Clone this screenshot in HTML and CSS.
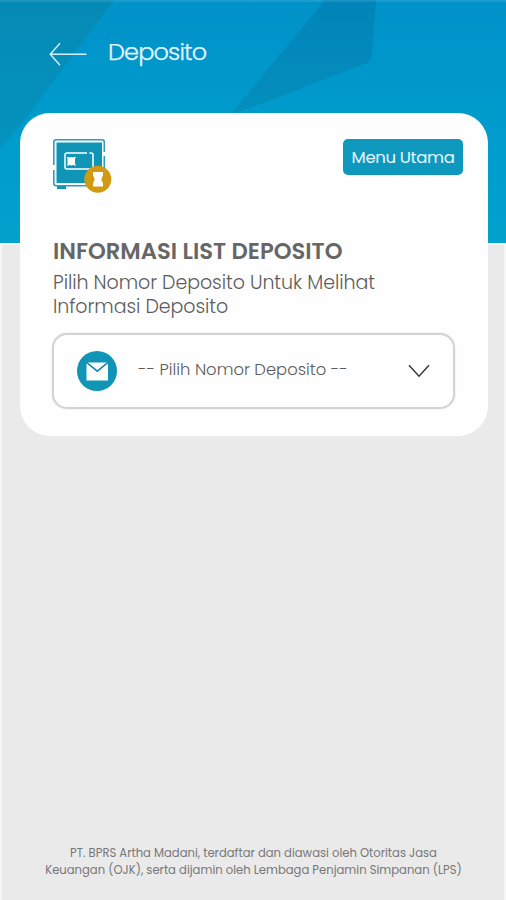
FILE: index.html
```html
<!DOCTYPE html>
<html lang="id">
<head>
<meta charset="utf-8">
<title>Deposito</title>
<link rel="stylesheet" href="styles.css">
</head>
<body>
<div class="screen">
  <svg class="backdrop" viewBox="0 0 506 245" aria-hidden="true">
    <defs>
      <linearGradient id="sky" x1="0" y1="0" x2="0" y2="1">
        <stop offset="0" stop-color="#0092c9"/><stop offset=".5" stop-color="#009bcc"/><stop offset="1" stop-color="#02a2cc"/>
      </linearGradient>
      <linearGradient id="shade" x1="0" y1="0" x2="0" y2="1">
        <stop offset="0" stop-color="#0589b5"/><stop offset="1" stop-color="#0494bf"/>
      </linearGradient>
      <linearGradient id="facet" x1="0" y1="0" x2="0" y2="1">
        <stop offset="0" stop-color="#0084b9"/><stop offset="1" stop-color="#048fbc"/>
      </linearGradient>
    </defs>
    <rect width="506" height="243" fill="url(#sky)"/>
    <path d="M0 243H506V245H0Z" fill="#f5f5f5"/>
    <path d="M0 0H114L24 121L0 149Z" fill="url(#shade)"/>
    <path d="M325 0H376L372 54Q371 61 367 63L253 107L231 114Z" fill="url(#facet)"/>
    <path d="M0 0H506V2H0Z" fill="#fff" opacity=".1"/>
  </svg>
  <header class="topbar">
    <svg class="back" width="38" height="24" viewBox="0 0 38 24"><path d="M37.5 12.3H1.2M11 1.3L1.2 12.3L11 23.3"/></svg>
    <h1>Deposito</h1>
  </header>
  <main class="card">
    <div class="card-top">
      <svg class="safe" width="60" height="56" viewBox="0 0 60 56">
        <path d="M4 47.5h9v3.5H4z" fill="#1095b7"/>
        <rect x=".8" y="1.8" width="50.5" height="46" rx="2.5" fill="none" stroke="#2f9cbe" stroke-width="1.6"/>
        <path d="M3.5 4.5h45.5v40.5h-45.5z" fill="#1095b7"/>
        <path d="M0 27h2.5v5H0zM50 14h3v4h-3z" fill="#fefefe"/>
        <path d="M34 15H14Q12 15 12 17V29Q12 31 14 31H38Q40 31 40 29V17Q40 15 38 15H36.5" fill="none" stroke="#fff" stroke-width="1.5"/>
        <path d="M14.5 19.5h7.5v7.5h-7.5z" fill="#fff"/>
        <path d="M14 19.500h9M14 27h9" fill="none" stroke="#fff" stroke-width="1.2" stroke-dasharray="2 1.500"/>
        <circle cx="44.8" cy="41.2" r="13.5" fill="#d09a13"/>
        <path d="M40 34h10v3.5q-3 4 0 7.5v3.5h-10v-3.5q3-3.500 0-7.500z" fill="#fff"/>
      </svg>
      <button class="menu">Menu Utama</button>
    </div>
    <h2>INFORMASI LIST DEPOSITO</h2>
    <p class="hint">Pilih Nomor Deposito Untuk Melihat<br>Informasi Deposito</p>
    <div class="select">
      <svg class="mail" width="40" height="40" viewBox="0 0 40 40">
        <circle cx="20" cy="20" r="20" fill="#1095b7"/>
        <path d="M9.5 11.5H31V29.5H9.5Z" fill="#fff"/>
        <path d="M9 11L20.3 20.2L31.5 11" fill="none" stroke="#1282b2" stroke-width="1.6"/>
      </svg>
      <span class="choice">-- Pilih Nomor Deposito --</span>
      <svg class="chevron" width="22" height="14" viewBox="0 0 22 14"><path d="M1 1.3L11 12.3L21 1.3"/></svg>
    </div>
  </main>
  <footer>PT. BPRS Artha Madani, terdaftar dan diawasi oleh Otoritas Jasa<br>Keuangan (OJK), serta dijamin oleh Lembaga Penjamin Simpanan (LPS)</footer>
</div>
</body>
</html>
```
FILE: styles.css
```css
* { box-sizing: border-box; }
body {
  margin: 0;
  background: #f6f6f6;
  font-family: Poppins, Inter, "Open Sans", sans-serif;
}
.screen {
  position: relative;
  display: flex;
  flex-direction: column;
  width: 506px;
  height: 900px;
  background: linear-gradient(90deg, #f7f7f7 2px, #eaeaea 2px, #eaeaea 504px, #f7f7f7 504px);
  overflow: hidden;
}
.backdrop { position: absolute; top: 0; left: 0; width: 506px; height: 245px; }
.topbar {
  position: relative;
  display: flex;
  align-items: center;
  height: 113px;
  padding: 0 0 5px 49px;
  color: #e6f6ff;
}
.back { margin-right: 21px; fill: none; stroke: #d4efff; stroke-width: 1.4; }
h1 { margin: -4px 0 0; font-size: 24px; font-weight: 300; line-height: 30px; letter-spacing: -.85px; -webkit-text-stroke: .25px; }
.card {
  position: relative;
  width: 468px;
  height: 323px;
  margin-left: 20px;
  padding: 25px 25px 0 33px;
  background: #fefefe;
  border-radius: 30px;
}
.card-top { display: flex; justify-content: space-between; align-items: flex-start; }
.menu {
  width: 120px;
  height: 36px;
  margin-top: 1px;
  padding: 2px 0 0;
  border: 0;
  border-radius: 5px;
  background: #0e98bd;
  color: #e8f8ff;
  font: 400 16.5px/34px Poppins, Inter, sans-serif;
  letter-spacing: -.35px;
  white-space: nowrap;
}
h2 { margin: 43px 0 0; color: #666; font-size: 22.7px; font-weight: 600; line-height: 28px; white-space: nowrap; }
.hint { margin: 6px 0 0; color: #5c5c5c; font-size: 19px; font-weight: 300; line-height: 24px; letter-spacing: -.07px; white-space: nowrap; }
.select {
  display: flex;
  align-items: center;
  width: 403px;
  height: 76px;
  margin: 14px 0 0 -1px;
  padding: 0 23px;
  border: 2px solid #d2d3d3;
  border-radius: 15px;
  background: #fefefe;
  box-shadow: 0 0 2px #ddd;
}
.mail { margin-right: 21px; flex: none; }
.choice { color: #5c5c5c; font-size: 16.4px; font-weight: 300; white-space: nowrap; margin-top: -3px; }
.chevron { margin-left: auto; fill: none; stroke: #333; stroke-width: 1.4; }
footer {
  margin-top: auto;
  padding: 0 0 21px 1px;
  color: #777;
  font-size: 11.6px;
  line-height: 17px;
  text-align: center;
  white-space: nowrap;
}
```
